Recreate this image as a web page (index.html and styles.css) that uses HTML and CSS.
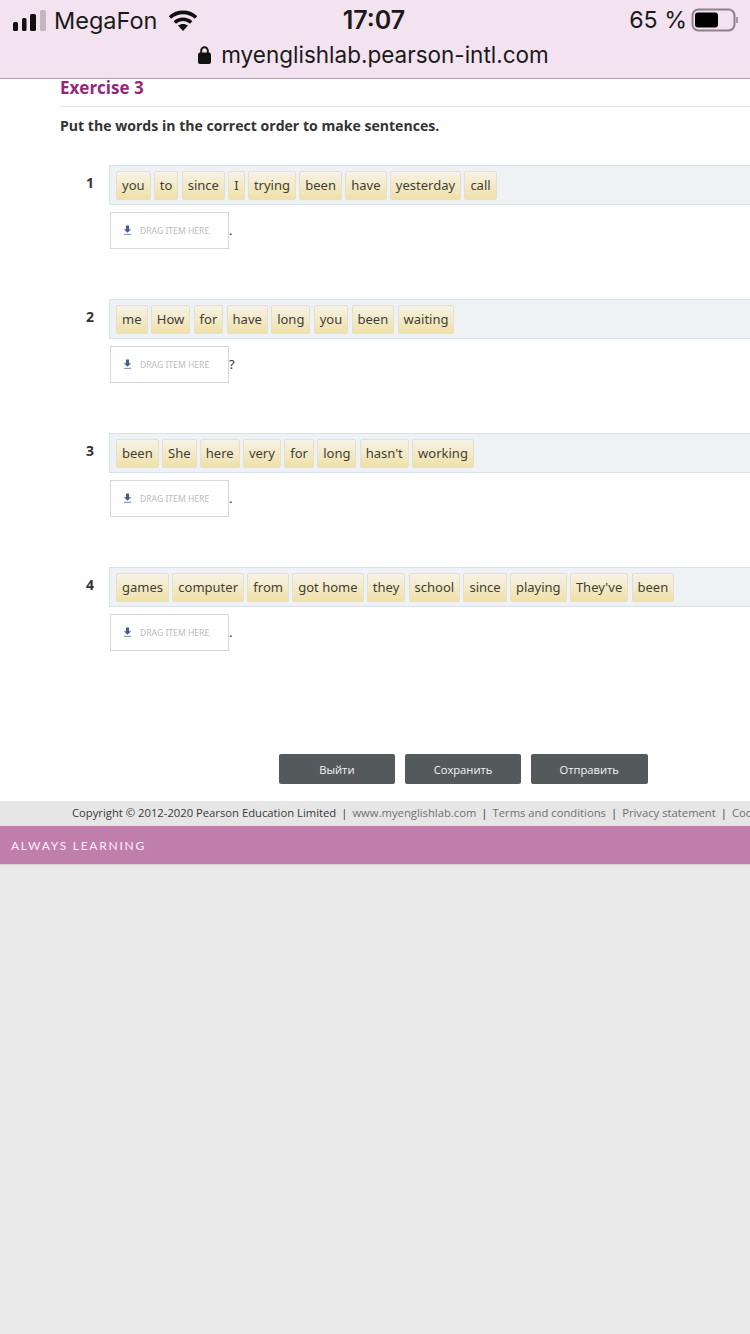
FILE: index.html
```html
<!DOCTYPE html>
<html lang="en">
<head>
<meta charset="utf-8">
<title>Exercise 3</title>
<link rel="stylesheet" href="styles.css">
</head>
<body>
<header class="browser">
  <div class="status">
    <div class="carrier">
      <svg class="signal" width="35" height="21" viewBox="0 0 35 21"><rect x="1" y="12" width="5" height="9" rx="1.500" fill="#111"/><rect x="10" y="8" width="4.500" height="13" rx="1.500" fill="#111"/><rect x="18" y="4" width="6" height="17" rx="1.500" fill="#111"/><rect x="28" y="0" width="6" height="21" rx="1.500" fill="#c4b6c1"/></svg>
      <span>MegaFon</span>
      <svg class="wifi" width="28" height="21" viewBox="0 0 28 21"><path d="M1 7.500C8.300.700 19.700.700 27 7.500" fill="none" stroke="#111" stroke-width="3.600"/><path d="M5.800 12.500c4.700-4.300 11.700-4.300 16.400 0" fill="none" stroke="#111" stroke-width="3.600"/><path d="M14 21l-5-5.400c3-2.300 7-2.300 10 0z" fill="#111"/></svg>
    </div>
    <div class="clock">17:07</div>
    <div class="power">
      <span>65 %</span>
      <svg class="battery" width="47" height="24" viewBox="0 0 47 24"><rect x="1.500" y="1.500" width="42" height="21" rx="6" fill="none" stroke="#8f7f8c" stroke-width="2"/><rect x="4" y="4.500" width="23" height="15" rx="3" fill="#000"/><path d="M46 9v6" stroke="#8f7f8c" stroke-width="1.500"/></svg>
    </div>
  </div>
  <div class="address">
    <svg width="13" height="20" viewBox="0 0 13 20"><path d="M3.200 8V5.500a3.300 3.300 0 0 1 6.600 0V8" fill="none" stroke="#111" stroke-width="1.900"/><rect x="0" y="7.500" width="13" height="11.500" rx="2" fill="#111"/></svg>
    <span>myenglishlab.pearson-intl.com</span>
  </div>
</header>

<main class="content">
  <h1 class="title">Exercise 3</h1>
  <p class="instruction">Put the words in the correct order to make sentences.</p>

  <section class="question">
    <div class="number">1</div>
    <div class="body">
      <div class="tray"><span class="tile">you</span><span class="tile">to</span><span class="tile">since</span><span class="tile">I</span><span class="tile">trying</span><span class="tile">been</span><span class="tile">have</span><span class="tile">yesterday</span><span class="tile">call</span></div>
      <div class="answer"><div class="drop"><svg class="arrow" width="9" height="11" viewBox="0 0 10 11"><path d="M3.300 0h3.400v4H9L5 8 1 4h2.300z" fill="#4a5a96"/><path d="M1 9.800h8" stroke="#8791b8" stroke-width="1.200"/></svg><span>DRAG ITEM HERE</span></div><span class="end">.</span></div>
    </div>
  </section>

  <section class="question">
    <div class="number">2</div>
    <div class="body">
      <div class="tray"><span class="tile">me</span><span class="tile">How</span><span class="tile">for</span><span class="tile">have</span><span class="tile">long</span><span class="tile">you</span><span class="tile">been</span><span class="tile">waiting</span></div>
      <div class="answer"><div class="drop"><svg class="arrow" width="9" height="11" viewBox="0 0 10 11"><path d="M3.300 0h3.400v4H9L5 8 1 4h2.300z" fill="#4a5a96"/><path d="M1 9.800h8" stroke="#8791b8" stroke-width="1.200"/></svg><span>DRAG ITEM HERE</span></div><span class="end">?</span></div>
    </div>
  </section>

  <section class="question">
    <div class="number">3</div>
    <div class="body">
      <div class="tray"><span class="tile">been</span><span class="tile">She</span><span class="tile">here</span><span class="tile">very</span><span class="tile">for</span><span class="tile">long</span><span class="tile">hasn't</span><span class="tile">working</span></div>
      <div class="answer"><div class="drop"><svg class="arrow" width="9" height="11" viewBox="0 0 10 11"><path d="M3.300 0h3.400v4H9L5 8 1 4h2.300z" fill="#4a5a96"/><path d="M1 9.800h8" stroke="#8791b8" stroke-width="1.200"/></svg><span>DRAG ITEM HERE</span></div><span class="end">.</span></div>
    </div>
  </section>

  <section class="question">
    <div class="number">4</div>
    <div class="body">
      <div class="tray"><span class="tile">games</span><span class="tile">computer</span><span class="tile">from</span><span class="tile">got home</span><span class="tile">they</span><span class="tile">school</span><span class="tile">since</span><span class="tile">playing</span><span class="tile">They've</span><span class="tile">been</span></div>
      <div class="answer"><div class="drop"><svg class="arrow" width="9" height="11" viewBox="0 0 10 11"><path d="M3.300 0h3.400v4H9L5 8 1 4h2.300z" fill="#4a5a96"/><path d="M1 9.800h8" stroke="#8791b8" stroke-width="1.200"/></svg><span>DRAG ITEM HERE</span></div><span class="end">.</span></div>
    </div>
  </section>

  <div class="actions">
    <button class="btn" type="button">Выйти</button>
    <button class="btn" type="button">Сохранить</button>
    <button class="btn" type="button">Отправить</button>
  </div>
</main>

<footer>
  <div class="legal"><span>Copyright © 2012-2020 Pearson Education Limited</span><i>|</i><a>www.myenglishlab.com</a><i>|</i><a>Terms and conditions</a><i>|</i><a>Privacy statement</a><i>|</i><a>Cookies</a></div>
  <div class="band">ALWAYS LEARNING</div>
</footer>
</body>
</html>
```
FILE: styles.css
```css
* { box-sizing: border-box; }
html, body { margin: 0; padding: 0; }
body {
  width: 750px;
  height: 1334px;
  overflow: hidden;
  background: #e9e9e9;
  font-family: "Open Sans", sans-serif;
  color: #333;
}

.browser {
  height: 79px;
  background: #f3e2ef;
  border-bottom: 1px solid #a9a3a8;
  font-family: Inter, "Liberation Sans", sans-serif;
  color: #1a1a1a;
}
.status {
  height: 40px;
  padding: 0 12px;
  display: grid;
  grid-template-columns: 1fr auto 1fr;
  align-items: center;
  font-size: 23.500px;
}
.carrier { display: flex; align-items: center; gap: 7px; }
.wifi { margin-left: 5px; }
.clock { margin-right: 2px; font-size: 25px; font-weight: 600; }
.power { display: flex; justify-content: flex-end; align-items: center; gap: 4px; font-size: 23.200px; }
.address {
  height: 29px;
  padding-right: 3px;
  display: flex;
  justify-content: center;
  align-items: center;
  gap: 10px;
  font-size: 22.500px;
}

.content { background: #fff; height: 722px; padding: 0 0 0 60px; overflow: hidden; }
.title {
  margin: 0;
  height: 28px;
  border-bottom: 1px solid #e3e3e3;
  font-size: 17px;
  line-height: 18px;
  font-weight: 700;
  color: #93277c;
}
.instruction { margin: 9px 0 0; height: 20px; font-size: 14.080px; line-height: 20px; font-weight: 700; }

.question { display: flex; height: 134px; }
.question:first-of-type { margin-top: 29px; }
.number { width: 49px; padding: 8px 0 0 26px; font-size: 14px; line-height: 20px; font-weight: 700; }
.body { flex: 1; min-width: 0; }
.tray {
  height: 40px;
  display: flex;
  gap: 3.300px;
  align-items: center;
  padding-left: 6px;
  background: #eef2f5;
  border: 1px solid #d9e2e8;
  border-right: 0;
  white-space: nowrap;
}
.tile {
  height: 29px;
  padding: 0 5px;
  line-height: 27px;
  font-family: "Noto Sans", sans-serif;
  font-size: 13px;
  color: #3f3f38;
  background: linear-gradient(#f6f3e6, #f0e0a8);
  border: 1px solid #e4e0cc;
  border-radius: 2px;
}
.answer { margin: 7px 0 0 1px; display: flex; align-items: center; }
.drop {
  width: 119px;
  height: 37px;
  display: flex;
  align-items: center;
  gap: 8px;
  padding-left: 12px;
  background: #fff;
  border: 1px solid #d5d7db;
  font-family: "Noto Sans", sans-serif;
  font-size: 8.600px;
  color: #b9bcc2;
}
.arrow { flex: none; }
.end { margin-bottom: 2px; font-size: 13px; line-height: 20px; font-family: "Noto Sans", sans-serif; }

.actions { display: flex; gap: 9.500px; margin: 53px 0 0 218.500px; }
.btn {
  width: 116.700px;
  height: 30px;
  padding: 0;
  border: 0;
  border-radius: 2px;
  background: #54595c;
  color: #f4f4f4;
  font-family: "Open Sans", sans-serif;
  font-size: 11.200px;
}

.legal {
  height: 25px;
  padding: 0 0 2px 72px;
  display: flex;
  align-items: center;
  background: #e6e6e6;
  border-bottom: 1px solid #f2d9e8;
  font-size: 11.250px;
  white-space: nowrap;
  overflow: hidden;
  color: #3a3a3a;
}
.legal i { font-style: normal; margin: 0 5px; }
.legal a { color: #707070; }
.band {
  height: 38px;
  padding-left: 11px;
  background: #bf7eac;
  color: #fbeef6;
  font-family: "Lato", sans-serif;
  font-size: 12px;
  letter-spacing: 1.750px;
  line-height: 39px;
  box-shadow: 0 1px 1px #d5d5d5;
}
```
